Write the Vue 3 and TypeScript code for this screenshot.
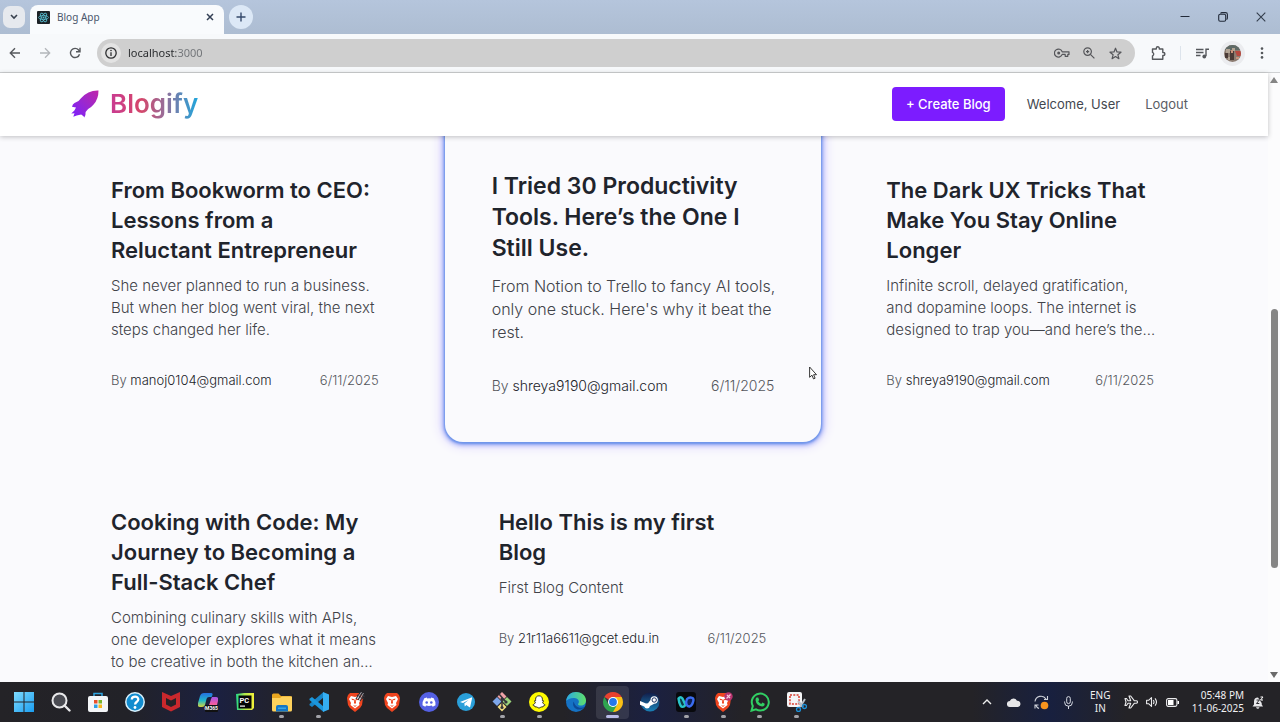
<script setup lang="ts">
interface Post {
  title: string
  excerpt: string
  author: string
  date: string
  active?: boolean
}

interface TaskIcon {
  name: string
  svg: string
  running?: boolean
  focused?: boolean
}

const posts: Post[] = [
  {
    title: 'From Bookworm to CEO: Lessons from a Reluctant Entrepreneur',
    excerpt: 'She never planned to run a business. But when her blog went viral, the next steps changed her life.',
    author: 'manoj0104@gmail.com',
    date: '6/11/2025',
  },
  {
    title: 'I Tried 30 Productivity Tools. Here’s the One I Still Use.',
    excerpt: "From Notion to Trello to fancy AI tools, only one stuck. Here's why it beat the rest.",
    author: 'shreya9190@gmail.com',
    date: '6/11/2025',
    active: true,
  },
  {
    title: 'The Dark UX Tricks That Make You Stay Online Longer',
    excerpt: 'Infinite scroll, delayed gratification, and dopamine loops. The internet is designed to trap you—and here’s the…',
    author: 'shreya9190@gmail.com',
    date: '6/11/2025',
  },
  {
    title: 'Cooking with Code: My Journey to Becoming a Full-Stack Chef',
    excerpt: 'Combining culinary skills with APIs, one developer explores what it means to be creative in both the kitchen an…',
    author: '',
    date: '',
  },
  {
    title: 'Hello This is my first Blog',
    excerpt: 'First Blog Content',
    author: '21r11a6611@gcet.edu.in',
    date: '6/11/2025',
  },
]

const lion = (extra: string) =>
  `<path fill="#f0451f" d="M5 1h10l2 2 1 3-1 7-2 3-5 4-5-4-2-3-1-7 1-3z"/><path fill="#fff" d="M6 4l4 1 4-1 2 3-2 4 .5 2L10 16.500 5.500 13l.5-2-2-4z"/><path fill="#f0451f" d="M6.500 6.500l2.500.8v1l-2-.3zM13.500 6.500l-2.500.8v1l2-.3zM9.300 7.500h1.400l.3 3.500-1 1-1-1zM8 13l2 .8 2-.8-2 2z"/>${extra}`

const tasks: TaskIcon[] = [
  {
    name: 'Start',
    svg: '<defs><linearGradient id="win" x1="0" y1="0" x2="1" y2="1"><stop offset="0" stop-color="#7fdcff"/><stop offset="1" stop-color="#1a9df0"/></linearGradient></defs><path fill="url(#win)" d="M0 0h9.500v9.500H0zM10.500 0H20v9.500h-9.500zM0 10.500h9.500V20H0zM10.500 10.500H20V20h-9.500z"/>',
  },
  {
    name: 'Search',
    svg: '<circle cx="8.500" cy="8.500" r="7" fill="#4a4b52" stroke="#e8e8ea" stroke-width="2"/><path d="M13.500 13.500l5 5" stroke="#e8e8ea" stroke-width="2.400" stroke-linecap="round"/>',
  },
  {
    name: 'Microsoft Store',
    svg: '<path d="M6 5V1.500h8V5" fill="none" stroke="#2fa5e0" stroke-width="1.500"/><rect y="4" width="20" height="16" rx="2" fill="#f4f6f8"/><path fill="#e8502a" d="M6 8h3.500v3.500H6z"/><path fill="#78b62c" d="M10.500 8H14v3.500h-3.500z"/><path fill="#2b9fe6" d="M6 12.500h3.500V16H6z"/><path fill="#f7b71d" d="M10.500 12.500H14V16h-3.500z"/>',
  },
  {
    name: 'Get Help',
    svg: '<circle cx="10" cy="10" r="9.200" fill="#128ccf" stroke="#d9f1fc" stroke-width="1.500"/><path d="M6.800 7.500C6.800 3.500 13.500 3.600 13.300 7.500c-.1 2.200-3.200 2.400-3.200 5" fill="none" stroke="#fff" stroke-width="2.300"/><circle cx="10" cy="15.500" r="1.400" fill="#fff"/>',
  },
  {
    name: 'McAfee',
    svg: '<path fill="#c9282d" d="M1 0l9 4 9-4v15l-9 4.500L1 15z"/><path fill="#242228" d="M5 6l5 2.500L15 6v6.500l-5 2.500-5-2.500z"/>',
  },
  {
    name: 'Microsoft 365 Copilot',
    svg: '<defs><linearGradient id="cpa" x1="0" y1="0" x2="0" y2="1"><stop offset="0" stop-color="#2470e0"/><stop offset=".55" stop-color="#23b8c8"/><stop offset="1" stop-color="#d6d43b"/></linearGradient><linearGradient id="cpb" x1="0" y1="0" x2="0" y2="1"><stop offset="0" stop-color="#a357e8"/><stop offset=".5" stop-color="#ef5aa7"/><stop offset="1" stop-color="#f4945f"/></linearGradient></defs><path fill="url(#cpa)" d="M6 1h7q2 0 1.500 2l-1 2H11q-2 0-2.500 2L7 13q-.7 2-3 2H2q-3 0-2-4l2-7q1-3 4-3z"/><path fill="url(#cpb)" d="M14 5h4q3 0 2 4l-1.500 6q-1 3-4 3H8q-2 0-1.500-2L7 14h2q2 0 2.500-2L13 7z"/><rect x="7" y="13" width="13" height="7" rx="1" fill="#111"/><text x="13.500" y="18.300" font-family="Roboto, sans-serif" font-size="5" font-weight="700" fill="#fff" text-anchor="middle">M365</text>',
  },
  {
    name: 'PyCharm',
    svg: '<defs><linearGradient id="pyc" x1="0" y1="0" x2="1" y2="0"><stop offset="0" stop-color="#22d88a"/><stop offset=".5" stop-color="#b5e84a"/><stop offset="1" stop-color="#f4f23a"/></linearGradient></defs><path fill="url(#pyc)" d="M1 2l8-1h10v15l-2 2H2z"/><rect x="3.500" y="3.500" width="13" height="13" fill="#050505"/><text x="4.500" y="10.500" font-family="Roboto, sans-serif" font-size="7.500" font-weight="700" fill="#fff">PC</text><path fill="#fff" d="M5 13.500h5v1.200H5z"/>',
  },
  {
    name: 'File Explorer',
    svg: '<path fill="#e9a620" d="M0 3q0-1.500 1.500-1.500h5L9 4h9q2 0 2 2v6H0z"/><path fill="#fed25c" d="M0 6h8l2-1.500h10V18q0 1.500-1.500 1.500h-17Q0 19.500 0 18z"/><path fill="#1576c4" d="M4 19.500V15q0-2 2-2h8q2 0 2 2v4.500z"/><path fill="#38a7e8" d="M6 15.500h8V17H6z"/>',
    running: true,
  },
  {
    name: 'Visual Studio Code',
    svg: '<path fill="#1784c7" d="M14.500 0v5.500L3 15 .5 13.300V12z"/><path fill="#1b96dc" d="M14.500 20v-5.500L3 5 .5 6.700V8z"/><path fill="#35aef2" d="M14 0l6 2.500v15L14 20z"/>',
    running: true,
  },
  {
    name: 'Brave Nightly',
    svg: lion('<path d="M11 7l4-6M13 8l4-7M15 9l4-6M12 3l7 4M14 1l6 4" stroke="#303036" stroke-width="1.300"/><path d="M12.500 6l4-6M14.500 8l4-7" stroke="#b5b5bc" stroke-width=".8"/>'),
  },
  { name: 'Brave', svg: lion('') },
  {
    name: 'Discord',
    svg: '<circle cx="10" cy="10" r="10" fill="#5460e4"/><path fill="#fff" d="M7.800 5.500l.5.900q1.700-.3 3.400 0l.5-.9 2.500.8q2 3 1.800 7-1.300 1-2.800 1.400l-.8-1.200q-2.900.9-5.800 0l-.8 1.200q-1.500-.4-2.800-1.400-.2-4 1.800-7z"/><circle cx="7.700" cy="10.500" r="1.300" fill="#5460e4"/><circle cx="12.300" cy="10.500" r="1.300" fill="#5460e4"/>',
  },
  {
    name: 'Telegram',
    svg: '<circle cx="10" cy="10" r="9" fill="#2a9fd9"/><path fill="#fff" d="M4 10l11.500-4.600q.8-.2.6.8l-1.900 8.500q-.3.9-1.100.4l-2.800-2.100-1.500 1.400-.5-3L12.500 8 7 11z"/>',
  },
  {
    name: 'Git',
    svg: '<path fill="#f0a2a6" d="M10 0l4.500 4.500L10 9 5.500 4.500z"/><path fill="#7ea6e8" d="M5 5l4.500 4.500L5 14 .5 9.500z"/><path fill="#9bd47c" d="M15 5l4.500 4.500L15 14l-4.500-4.500z"/><path fill="#f1dc82" d="M10 10.500l4.500 4.500-4.500 4.500L5.500 15z"/><path d="M7 2l7 8M10 5v11" stroke="#34343b" stroke-width="1.500"/><circle cx="10" cy="7" r="1.600" fill="#34343b"/><circle cx="14" cy="10" r="1.600" fill="#34343b"/><circle cx="10" cy="15.500" r="1.600" fill="#34343b"/>',
    running: true,
  },
  {
    name: 'Snapchat',
    svg: '<circle cx="10" cy="10" r="10" fill="#fffb00"/><path fill="#fff" stroke="#222" stroke-width=".9" stroke-linejoin="round" d="M10 3.800c2.200 0 3.400 1.500 3.400 3.400v1.600l1.400.2-1.200 1.200c.5 1.400 1.300 2.200 2.600 2.700-.2.700-1 .8-1.800 1l-.4 1c-1.300-.2-2.200.2-4 1.300-1.800-1.100-2.700-1.500-4-1.300l-.4-1c-.8-.2-1.600-.3-1.800-1 1.300-.5 2.100-1.300 2.600-2.700L5.200 9l1.400-.2V7.200c0-1.900 1.200-3.400 3.400-3.400z"/>',
    running: true,
  },
  {
    name: 'Edge',
    svg: '<defs><linearGradient id="edg" x1="0" y1="0" x2="1" y2="0"><stop offset="0" stop-color="#2aa9e6"/><stop offset="1" stop-color="#5fe06a"/></linearGradient></defs><circle cx="10" cy="10" r="10" fill="#1572c4"/><path fill="url(#edg)" d="M0 9C1 3 5 0 10 0c6 0 10 4 10 8.500 0 3-2.300 5-5 5-1.700 0-3-.6-3-1.300 0-.5.9-1 .9-2.400C12.900 7.500 10.500 6 7.500 6 4 6 1.500 7.500 0 9z"/><path fill="#0c4a98" d="M7.800 9.500C5.500 13 9 18.500 14.500 17.500c2-.4 3.700-1.500 4.300-2.400-6 2.300-10.200-1-11-5.600z"/>',
  },
  {
    name: 'Chrome',
    svg: '<path fill="#e8412f" d="M10 10L1.340 5A10 10 0 0 1 18.660 5z"/><path fill="#fbc116" d="M10 10L10 5h8.660A10 10 0 0 1 10 20z"/><path fill="#2fa64f" d="M10 10l4.300 2.500L10 20A10 10 0 0 1 1.340 5l4.330 7.500z"/><circle cx="10" cy="10" r="5" fill="#fff"/><circle cx="10" cy="10" r="3.900" fill="#2478ec"/>',
    running: true,
    focused: true,
  },
  {
    name: 'Steam',
    svg: '<defs><linearGradient id="stm" x1="0" y1="0" x2="0" y2="1"><stop offset="0" stop-color="#121c48"/><stop offset="1" stop-color="#1a82b8"/></linearGradient></defs><circle cx="10" cy="10" r="9.500" fill="url(#stm)"/><path fill="#fff" d="M0 9l6 2.500 2-.3L10.500 8q.2-3.600 3.700-3.700 3.600.2 3.700 3.700-.2 3.500-3.700 3.700L10 14q-.5 2.500-3 2.500-2 0-2.800-2L0 12.800z"/><circle cx="14.200" cy="8" r="2.200" fill="#fff" stroke="#1b3264" stroke-width="1"/>',
  },
  {
    name: 'Webex',
    svg: '<rect width="20" height="20" rx="3" fill="#08090d"/><path d="M2.500 6.500q2-2.500 4 0L9.500 13q-3 3.500-5 .5-1.500-3-2-7z" fill="#0d3c46" stroke="#28c4c8" stroke-width="2.400" stroke-linejoin="round"/><path d="M11 7q2.500-2.500 5.500-1 1.500 1 .7 3.500-1 4-3.500 5-2 .5-3.200-2-.8-3 .5-5.500z" fill="#0d1f55" stroke="#3a6cf0" stroke-width="2.400" stroke-linejoin="round"/>',
    running: true,
  },
  {
    name: 'Brave Beta',
    svg: lion('<circle cx="15.500" cy="4.500" r="4.200" fill="#b8336e"/><path d="M13.500 6.500l4-4M14 3l3 3" stroke="#f6c6d8" stroke-width="1.200"/>'),
    running: true,
  },
  {
    name: 'WhatsApp',
    svg: '<path fill="none" stroke="#31cf63" stroke-width="2" d="M1.500 18.700l1.300-4.600A8.500 8.500 0 1 1 6 17.400z"/><path fill="#31cf63" d="M6.500 5.500h1.700l1 2.400-1 1.300q1 1.900 3 2.700l1.200-1.300 2.300 1.100q0 2.600-2.600 2.800-5.800-.8-6.600-6.500 0-1.600 1-2.500z"/>',
    running: true,
  },
  {
    name: 'Snipping Tool',
    svg: '<rect width="15" height="15" rx="2" fill="#f4f4f6"/><rect x="3" y="3" width="9" height="9" fill="none" stroke="#d83a2c" stroke-width="1.500" stroke-dasharray="2 1.300"/><path d="M18 7l-5 8M11 9l5 6" stroke="#b9c0c8" stroke-width="2"/><circle cx="17.500" cy="14.500" r="2" fill="none" stroke="#1b8fd8" stroke-width="1.300"/><circle cx="11.500" cy="17.500" r="2" fill="none" stroke="#1b8fd8" stroke-width="1.300"/>',
    running: true,
  },
]

const address = 'localhost:3000'
</script>

<template>
  <div class="screen">
    <header class="tabs">
      <button class="tab-list" type="button" aria-label="Search tabs">
        <svg width="8" height="6" viewBox="0 0 8 6"><path d="M1 1l3 3 3-3" fill="none" stroke="#39414f" stroke-width="1.600" /></svg>
      </button>
      <div class="tab">
        <svg class="favicon" width="13" height="13" viewBox="0 0 13 13">
          <rect width="13" height="13" rx="1" fill="#1c2227" />
          <g fill="none" stroke="#58bfd2" stroke-width=".8">
            <ellipse cx="6.500" cy="6.500" rx="5" ry="2" />
            <ellipse cx="6.500" cy="6.500" rx="5" ry="2" transform="rotate(60 6.500 6.500)" />
            <ellipse cx="6.500" cy="6.500" rx="5" ry="2" transform="rotate(120 6.500 6.500)" />
          </g>
          <circle cx="6.500" cy="6.500" r="1" fill="#58bfd2" />
        </svg>
        <span class="tab-title">Blog App</span>
        <button class="tab-close" type="button" aria-label="Close tab">
          <svg width="8" height="8" viewBox="0 0 8 8"><path d="M1 1l6 6M7 1L1 7" stroke="#344055" stroke-width="1.500" /></svg>
        </button>
      </div>
      <button class="new-tab" type="button" aria-label="New tab">
        <svg width="10" height="10" viewBox="0 0 10 10"><path d="M5 .5v9M.5 5h9" stroke="#34496b" stroke-width="1.400" /></svg>
      </button>
      <div class="window-controls">
        <button type="button" aria-label="Minimise"><svg width="10" height="10" viewBox="0 0 10 10"><path d="M.5 4.500h9" stroke="#222b3a" stroke-width="1" /></svg></button>
        <button type="button" aria-label="Restore"><svg width="10" height="10" viewBox="0 0 10 10"><rect x=".7" y="2.300" width="7" height="7" rx="1.500" fill="none" stroke="#222b3a" stroke-width="1.100" /><path d="M2.500 1.500Q3 .6 4 .6h3.500q1.900 0 1.900 1.900V6q0 1-.9 1.500" fill="none" stroke="#222b3a" stroke-width="1.100" /></svg></button>
        <button type="button" aria-label="Close"><svg width="10" height="10" viewBox="0 0 10 10"><path d="M.7.700l8.600 8.600M9.300.700L.7 9.300" stroke="#333d4c" stroke-width="1.100" /></svg></button>
      </div>
    </header>

    <div class="toolbar">
      <button class="tool" type="button" aria-label="Back"><svg width="12" height="12" viewBox="0 0 12 12"><path d="M11 6H1.500M6 1.300L1.300 6 6 10.700" fill="none" stroke="#55585c" stroke-width="1.400" /></svg></button>
      <button class="tool" type="button" aria-label="Forward"><svg width="12" height="12" viewBox="0 0 12 12"><path d="M1 6h9.500M6 1.300L10.700 6 6 10.700" fill="none" stroke="#b3b6ba" stroke-width="1.300" /></svg></button>
      <button class="tool" type="button" aria-label="Reload"><svg width="12" height="12" viewBox="0 0 12 12"><path d="M10.500 7.200A4.600 4.600 0 1 1 9.600 3l1 1.200" fill="none" stroke="#55585c" stroke-width="1.400" /><path d="M11 .8v4H7" fill="none" stroke="#55585c" stroke-width="1.400" /></svg></button>
      <div class="omnibox">
        <button class="site-info" type="button" aria-label="View site information">
          <svg width="12" height="12" viewBox="0 0 12 12"><circle cx="6" cy="6" r="5.200" fill="none" stroke="#2e2f31" stroke-width="1.300" /><path d="M6 5.200V9" stroke="#2e2f31" stroke-width="1.300" /><circle cx="6" cy="3.500" r=".8" fill="#2e2f31" /></svg>
        </button>
        <input class="address" type="text" :value="address" aria-label="Address" />
        <button class="omni-action" type="button" aria-label="Passwords"><svg width="16" height="10" viewBox="0 0 16 10"><path d="M8.200 3.800H15v2.600h-1.200v1.900h-2.600V6.400h-3A4 4 0 1 1 8.200 3.800z" fill="none" stroke="#55565a" stroke-width="1.200" stroke-linejoin="round" /><circle cx="4.700" cy="5" r="1.500" fill="#55565a" /></svg></button>
        <button class="omni-action" type="button" aria-label="Zoom"><svg width="12" height="12" viewBox="0 0 12 12"><circle cx="4.600" cy="4.600" r="3.800" fill="none" stroke="#55565a" stroke-width="1.200" /><path d="M7.400 7.400l4 4M4.600 3v3.200M3 4.600h3.200" stroke="#55565a" stroke-width="1.200" /></svg></button>
        <button class="omni-action" type="button" aria-label="Bookmark this tab"><svg width="13" height="13" viewBox="0 0 13 13"><path d="M6.500 1.200l1.500 3.700 4 .3-3.100 2.600 1 3.900-3.400-2.100-3.400 2.100 1-3.900L1 5.200l4-.3z" fill="none" stroke="#55565a" stroke-width="1.200" stroke-linejoin="round" /></svg></button>
      </div>
      <button class="tool" type="button" aria-label="Extensions"><svg width="15" height="14" viewBox="0 0 15 14"><path d="M1.500 3h3.800V2.200a1.500 1.500 0 0 1 3 0V3h3.500v3.500h.6a1.500 1.500 0 0 1 0 3h-.6v3.700H1.500V9.800a1.800 1.800 0 0 0 0-3.400z" fill="none" stroke="#55585c" stroke-width="1.400" stroke-linejoin="round" /></svg></button>
      <span class="divider"></span>
      <button class="tool" type="button" aria-label="Media controls"><svg width="13" height="11" viewBox="0 0 13 11"><path d="M0 1.500h7.500M0 4.500h7.500M0 7.500h4.500" stroke="#55585c" stroke-width="1.300" /><path d="M10 8V1.200h3" fill="none" stroke="#55585c" stroke-width="1.400" /><circle cx="8.300" cy="8.500" r="1.900" fill="#55585c" /></svg></button>
      <button class="tool" type="button" aria-label="Profile">
        <span class="profile">
          <svg width="17" height="17" viewBox="0 0 17 17">
            <clipPath id="face"><circle cx="8.500" cy="8.500" r="8.500" /></clipPath>
            <g clip-path="url(#face)">
              <rect width="17" height="17" fill="#8b7b70" />
              <path fill="#5f6a66" d="M0 0h17v5H0z" />
              <path fill="#b3a494" d="M2 4h4v4H2zM8 3h3v3H8zM4 12h5v3H4z" />
              <path fill="#b8483f" d="M11 6h6v5h-4z" />
              <path fill="#4a3a36" d="M6 6h4v9H6zM1 8h3v5H1z" />
              <path fill="#c9937c" d="M7 5h2v3H7zM12 12h3v2h-3z" />
            </g>
          </svg>
        </span>
      </button>
      <button class="tool" type="button" aria-label="Menu"><svg width="4" height="12" viewBox="0 0 4 12" fill="#55585c"><circle cx="2" cy="1.600" r="1.300" /><circle cx="2" cy="6" r="1.300" /><circle cx="2" cy="10.400" r="1.300" /></svg></button>
    </div>

    <div class="viewport">
      <div class="page">
        <nav class="nav">
          <a class="brand" href="#">
            <svg width="28" height="28" viewBox="0 0 28 28">
              <defs>
                <linearGradient id="rocket" x1="1" y1="0" x2="0" y2="1">
                  <stop offset="0" stop-color="#c026a8" />
                  <stop offset=".5" stop-color="#9a28d0" />
                  <stop offset="1" stop-color="#7a1fff" />
                </linearGradient>
              </defs>
              <path fill="url(#rocket)" d="M27.500.400Q17 0 10 8.200L7.500 11 3.500 13Q1.500 14 1 16.800l4 .6-1.600 3L.3 23.500l3.200-.2-1.200 3.500 3.400-1.200 4.500-1.200 2.300 1.800.8 1.200q1.600-2 1.300-5.400l2.500-3q3-1.600 5.500-4.600Q27.500 9 27.500.400z" />
            </svg>
            <span class="brand-name">Blogify</span>
          </a>
          <button class="create" type="button">+ Create Blog</button>
          <span class="welcome">Welcome, User</span>
          <a class="logout" href="#">Logout</a>
        </nav>
        <main class="posts">
          <article v-for="post in posts" :key="post.title" class="post" :class="{ active: post.active }">
            <h2 class="title">{{ post.title }}</h2>
            <p class="excerpt">{{ post.excerpt }}</p>
            <footer v-if="post.author" class="meta">
              <span>By <span class="author">{{ post.author }}</span></span>
              <time>{{ post.date }}</time>
            </footer>
          </article>
        </main>
      </div>
      <div class="scrollbar">
        <svg width="8" height="6" viewBox="0 0 8 6"><path d="M4 0l4 6H0z" fill="#858585" /></svg>
        <div class="track"><div class="thumb"></div></div>
        <svg width="8" height="6" viewBox="0 0 8 6"><path d="M4 6l4-6H0z" fill="#6a6a6a" /></svg>
      </div>
    </div>

    <footer class="taskbar">
      <div class="apps">
        <button v-for="task in tasks" :key="task.name" type="button" class="app" :class="{ running: task.running, focused: task.focused }" :aria-label="task.name">
          <svg width="20" height="20" viewBox="0 0 20 20" v-html="task.svg"></svg>
        </button>
      </div>
      <div class="tray">
        <button type="button" aria-label="Show hidden icons"><svg width="10" height="6" viewBox="0 0 10 6"><path d="M1 5l4-4 4 4" fill="none" stroke="#eee" stroke-width="1.400" /></svg></button>
        <button type="button" aria-label="OneDrive"><svg width="14" height="9" viewBox="0 0 14 9"><path fill="#e6e6e8" d="M3 9a3 3 0 0 1-.2-6A4 4 0 0 1 10 2.700 3.200 3.200 0 0 1 11 9z" /></svg></button>
        <button type="button" aria-label="Updates"><svg width="15" height="15" viewBox="0 0 15 15"><path d="M1 6.500A6 6 0 0 1 12 4M13.500 1v3.500H10M5 13.500A6 6 0 0 1 1.800 10M1 13.500V10h3.500" fill="none" stroke="#cfd2da" stroke-width="1.100" /><circle cx="10.500" cy="10.500" r="3.800" fill="#f7941e" /></svg></button>
        <button type="button" aria-label="Microphone"><svg width="9" height="13" viewBox="0 0 9 13"><rect x="2.700" y=".6" width="3.600" height="7" rx="1.800" fill="none" stroke="#d9dce5" stroke-width="1" /><path d="M.6 5.500v.8a3.900 3.900 0 0 0 7.800 0v-.8M4.500 10v3" fill="none" stroke="#d9dce5" stroke-width="1" /></svg></button>
        <button type="button" class="language">ENG<br />IN</button>
        <button type="button" class="quick" aria-label="Network, volume and battery">
          <svg width="14" height="14" viewBox="0 0 14 14"><path d="M1 3.500h1.500L4 5.700h2.700L5 1h1.700l3.500 4.700h2q1.300 0 1.300 1.300t-1.300 1.300h-2L6.700 13H5l1.700-4.700H4l-1.500 2.200H1L2 7z" fill="none" stroke="#ececee" stroke-width="1.100" stroke-linejoin="round" /></svg>
          <svg width="12" height="12" viewBox="0 0 12 12"><path d="M.6 4.300h2L5.500 1.600v8.800L2.600 7.700h-2zM7.300 4q1.400 2 0 4M9 2.300q3 3.700 0 7.400" fill="none" stroke="#ececee" stroke-width="1.100" stroke-linejoin="round" /></svg>
          <svg width="13" height="9" viewBox="0 0 13 9"><rect x=".6" y=".6" width="10.300" height="7.800" rx="1.600" fill="none" stroke="#ececee" stroke-width="1.100" /><path fill="#fff" d="M2 2h5.500v5H2zM11.500 3H13v3h-1.500z" /></svg>
        </button>
        <button type="button" class="clock">05:48 PM<br />11-06-2025</button>
        <button type="button" class="bell" aria-label="Notifications"><svg width="12" height="13" viewBox="0 0 12 13"><path fill="#e9e9eb" d="M6 1.500q-4 0-4 4v3L.5 10.500h10.500L9.700 8.500V7zM4 11.300h3.500q-.5 1.500-1.700 1.500T4 11.300z" /><path d="M4.500 4h2.800L4.500 7.500h2.800" fill="none" stroke="#2a2a30" stroke-width="1" /><path d="M8.500 1h2.500L8.500 4H11" fill="none" stroke="#fff" stroke-width="1" /></svg></button>
      </div>
    </footer>

    <svg class="cursor" width="8" height="14" viewBox="0 0 8 14"><path d="M.6 1v10.300L3 9.200l1.500 3.700 1.600-.7-1.500-3.500h2.900z" fill="#fff" stroke="#222" stroke-width=".9" /></svg>
  </div>
</template>

<style>
html,
body {
  margin: 0;
}
</style>

<style scoped>
.screen {
  position: relative;
  display: flex;
  flex-direction: column;
  height: 100vh;
  overflow: hidden;
  font-family: Inter, 'Liberation Sans', sans-serif;
}

button {
  display: flex;
  align-items: center;
  justify-content: center;
  padding: 0;
  border: 0;
  background: none;
  font: inherit;
  color: inherit;
}

a {
  color: inherit;
  text-decoration: none;
}

.tabs {
  display: flex;
  flex: none;
  align-items: center;
  height: 34px;
  padding-left: 3px;
  background: linear-gradient(#b5c5dc, #adbdd2);
  font-family: 'Noto Sans', sans-serif;
}

.tab-list {
  width: 22px;
  height: 22px;
  border-radius: 7px;
  background: #e6e9ee;
}

.tab {
  display: flex;
  align-self: flex-end;
  align-items: center;
  width: 194px;
  height: 29px;
  margin: 0 5px;
  padding: 0 8px 5px 7px;
  box-sizing: border-box;
  border-radius: 8px 8px 0 0;
  background: #f9fbfd;
}

.tab-title {
  flex: 1;
  margin-left: 7px;
  font-size: 10px;
  line-height: 16px;
  color: #49566c;
}

.tab-close {
  width: 12px;
  height: 12px;
}

.new-tab {
  width: 24px;
  height: 24px;
  border-radius: 50%;
  background: #dce8f6;
}

.window-controls {
  display: flex;
  margin-left: auto;
}

.window-controls button {
  width: 38px;
  height: 32px;
}

.toolbar {
  display: flex;
  flex: none;
  align-items: center;
  height: 38px;
  padding-right: 3px;
  background: #f7f9fb;
}

.tool {
  flex: none;
  width: 30px;
  height: 30px;
}

.omnibox {
  display: flex;
  flex: 1;
  align-items: center;
  height: 28px;
  margin: 0 8px 0 7px;
  padding: 0 6px 0 4px;
  border-radius: 14px;
  background: #cfcfcf;
}

.site-info {
  width: 20px;
  height: 20px;
  border-radius: 50%;
  background: #e3e3e3;
}

.address {
  flex: 1;
  min-width: 0;
  margin-left: 7px;
  padding: 0;
  border: 0;
  outline: 0;
  background: linear-gradient(90deg, #26282b 48px, #707377 48px);
  background-clip: text;
  -webkit-text-fill-color: transparent;
  font: 11px/20px 'Noto Sans', sans-serif;
}

.omni-action {
  width: 27px;
  height: 24px;
}

.divider {
  flex: none;
  width: 1px;
  height: 14px;
  margin: 0 6px 0 7px;
  background: #dde4ec;
}

.profile {
  display: flex;
  padding: 4px;
  border-radius: 50%;
  background: #ebecef;
}

.viewport {
  display: flex;
  flex: 1;
  min-height: 0;
  border-top: 1px solid #cfd1d3;
  background: #fcfcfd;
}

.page {
  display: flex;
  flex: 1;
  flex-direction: column;
  min-width: 0;
  background: #fafafd;
}

.nav {
  position: relative;
  z-index: 1;
  display: flex;
  flex: none;
  align-items: center;
  height: 63px;
  padding: 0 80px 1px 71px;
  box-sizing: border-box;
  background: #fff;
  box-shadow: 0 1px 5px rgba(0, 0, 0, 0.24);
  font-size: 13px;
  line-height: 20px;
  color: #43474f;
}

.brand {
  display: flex;
  align-items: center;
  gap: 11px;
  margin-right: auto;
}

.brand-name {
  background: linear-gradient(90deg, #c93b92, #d5466a 35%, #9c6b96 60%, #1fa6dc);
  background-clip: text;
  color: transparent;
  font-size: 26px;
  font-weight: 600;
  line-height: 34px;
}

.create {
  height: 34px;
  padding: 0 14px;
  border-radius: 4px;
  background: #7c1cff;
  color: #fff;
  font-weight: 500;
}

.welcome {
  margin: 0 25px 0 22px;
}

.logout {
  color: #5a5d64;
}

.posts {
  display: grid;
  flex: 1;
  grid-template-columns: repeat(3, 1fr);
  gap: 40px 29px;
  align-items: start;
  align-content: start;
  min-height: 0;
  padding: 0 68px 0 66px;
  overflow: hidden;
}

.post {
  padding: 39px 46px 39px 45px;
  font-size: 15px;
  font-weight: 300;
  line-height: 22px;
}

.title {
  margin: 0 0 10px;
  color: #1f242c;
  font-size: 22px;
  font-weight: 600;
  line-height: 30px;
}

.excerpt {
  margin: 0 -4px 30px 0;
  color: #414349;
}

.meta {
  display: flex;
  justify-content: space-between;
  color: #54565c;
  font-size: 13px;
  line-height: 18px;
}

.author {
  color: #202228;
}

.post.active {
  margin: -40px -9px -16px;
  padding: 75px 47px 47px;
  border-radius: 18px;
  background: #fafafd;
  box-shadow: 0 1px 2px 1px #6f95ea, 0 1px 5px 2px #93a4f4, 0 0 12px 4px #e0d8ff;
  font-size: 16px;
  line-height: 23px;
}

.active .title {
  margin-bottom: 11px;
  font-size: 23px;
  line-height: 31px;
}

.active .excerpt {
  margin-bottom: 32px;
}

.active .meta {
  font-size: 14px;
  line-height: 19px;
}

.scrollbar {
  display: flex;
  flex: none;
  flex-direction: column;
  align-items: center;
  width: 12px;
  padding: 4px 0;
  box-sizing: border-box;
}

.track {
  display: flex;
  flex: 1;
  flex-direction: column;
  width: 7px;
}

.thumb {
  height: 44%;
  margin-top: auto;
  margin-bottom: 104px;
  border-radius: 4px;
  background: #858585;
}

.taskbar {
  display: flex;
  flex: none;
  align-items: center;
  justify-content: space-between;
  height: 40px;
  padding: 0 16px 0 6px;
  background: linear-gradient(90deg, #242327 0, #222228 10%, #1b2040 17%, #242327 23%, #242327 44%, #1b2040 51%, #242327 58%, #242327 76%, #18203f 82%, #242327 88%);
}

.apps {
  display: grid;
  grid-template-columns: repeat(22, 1fr);
  width: 809px;
}

.app {
  position: relative;
  height: 40px;
}

.app.focused::before {
  content: '';
  position: absolute;
  inset: 4px 2px 3px;
  border-radius: 4px;
  background: rgba(255, 255, 255, 0.1);
}

.app svg {
  position: relative;
}

.app.running::after {
  content: '';
  position: absolute;
  bottom: 4px;
  width: 5px;
  height: 3px;
  border-radius: 2px;
  background: #a3a3a9;
}

.app.focused::after {
  width: 13px;
  background: #b9bbe8;
}

.tray {
  display: flex;
  align-items: center;
  color: #f1f1f3;
  font: 10px/13px 'Noto Sans', sans-serif;
}

.tray button {
  width: 27px;
  height: 36px;
}

.tray .language {
  width: 37px;
}

.tray .quick {
  gap: 8px;
  width: auto;
  margin-left: 5px;
}

.tray .clock {
  width: auto;
  margin-left: 13px;
  text-align: right;
}

.tray .bell {
  width: 12px;
  margin-left: 8px;
}

.cursor {
  position: absolute;
  left: 809px;
  top: 366px;
}
</style>
